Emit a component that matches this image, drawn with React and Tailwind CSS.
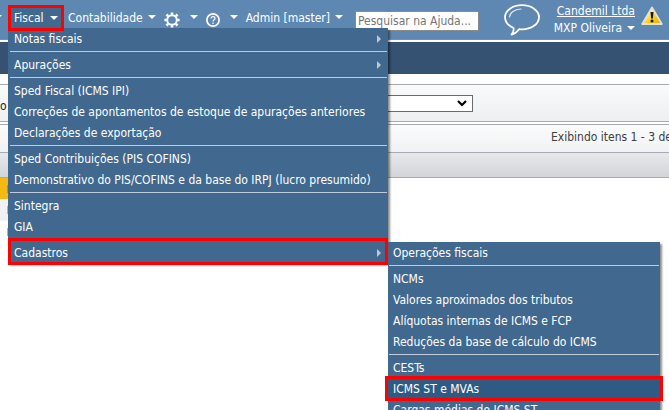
const FISCAL_MENU = [
  [{ label: "Notas fiscais", arrow: true }],
  [{ label: "Apurações", arrow: true }],
  [
    { label: "Sped Fiscal (ICMS IPI)" },
    { label: "Correções de apontamentos de estoque de apurações anteriores" },
    { label: "Declarações de exportação" },
  ],
  [
    { label: "Sped Contribuições (PIS COFINS)" },
    { label: "Demonstrativo do PIS/COFINS e da base do IRPJ (lucro presumido)" },
  ],
  [{ label: "Sintegra" }, { label: "GIA" }],
];

const CADASTROS_MENU = [
  [{ label: "Operações fiscais" }],
  [
    { label: "NCMs" },
    { label: "Valores aproximados dos tributos" },
    { label: "Alíquotas internas de ICMS e FCP" },
    { label: "Reduções da base de cálculo do ICMS" },
  ],
  [
    { label: "CESTs" },
    { label: "ICMS ST e MVAs", selected: true },
    { label: "Cargas médias do ICMS ST" },
  ],
];

function Caret() {
  return (
    <svg className="mb-0.5 h-1 w-2 shrink-0" viewBox="0 0 8 4" fill="#fff">
      <path d="M0 0h8L4 4z" />
    </svg>
  );
}

function ArrowRight() {
  return (
    <svg className="h-2 w-1 shrink-0" viewBox="0 0 4 8" fill="#c3c7cb">
      <path d="M0 0l4 4-4 4z" />
    </svg>
  );
}

function Gear() {
  return (
    <svg className="mt-[3px] size-4" viewBox="0 0 16 16" fill="none" stroke="#fff">
      <circle cx="8" cy="8" r="4.8" strokeWidth="1.9" />
      <path
        strokeWidth="2.6"
        d="M8 .4v2.400M8 13.200v2.400M.4 8h2.400M13.200 8h2.400M2.500 2.500l1.600 1.600M11.900 11.900l1.600 1.600M13.500 2.500l-1.600 1.600M4.100 11.900l-1.600 1.600"
      />
    </svg>
  );
}

function Help() {
  return (
    <svg className="mt-[3px] size-[14px]" viewBox="0 0 14 14" fill="none" stroke="#fff">
      <circle cx="7" cy="7" r="6.100" strokeWidth="1.700" />
      <path strokeWidth="1.200" d="M5 5.600C5 4.300 5.900 3.600 7 3.600s2 .7 2 1.800c0 1.400-2 1.400-2 3.100M7 9.600v1.300" />
    </svg>
  );
}

function Bubble() {
  return (
    <svg className="h-8 w-9" viewBox="0 0 36 32" fill="none" stroke="#fff" strokeLinecap="round" strokeLinejoin="round">
      <path strokeWidth="1.8" d="M9.500 24C4.300 21.600 1 18 1 13.200 1 6.500 8.600 1.200 18 1.200s17 5.300 17 12-7.600 12.200-17 12.200c-1 0-2 0-2.900-.2-1.900 2.500-4.500 4.600-7.600 5.300 1.800-1.800 2.500-4 2-6.500z" />
      <path strokeWidth="1.2" strokeOpacity=".8" d="M5.500 13c.3-4.300 5-7.700 11.500-8" />
    </svg>
  );
}

function Warning() {
  return (
    <svg className="h-5 w-[22px]" viewBox="0 0 22 20">
      <defs>
        <linearGradient id="warn" x1="0" y1="0" x2="1" y2="1">
          <stop offset="0.3" stopColor="#fff6a8" />
          <stop offset="0.6" stopColor="#f8cf1c" />
          <stop offset="1" stopColor="#e0a800" />
        </linearGradient>
      </defs>
      <path d="M11 1.500L20.800 18H1.200z" fill="url(#warn)" stroke="#e3e0d4" strokeWidth="1.800" strokeLinejoin="round" />
      <path d="M9.500 6h3l-.6 6.500h-1.800z" fill="#1c1c1c" />
      <circle cx="11" cy="15" r="1.500" fill="#1c1c1c" />
    </svg>
  );
}

function NavButton({ label, icon, children }) {
  return (
    <button
      type="button"
      aria-label={label}
      className={"flex h-[26px] items-center whitespace-nowrap px-1 " + (icon ? "gap-2.5" : "gap-[5px]")}
    >
      {icon || children}
      <Caret />
    </button>
  );
}

function Separator() {
  return <li role="separator" className="mx-px my-0.5 h-px bg-[#bfcddb]" />;
}

function MenuItem({ label, arrow, selected }) {
  if (selected) {
    return (
      <li className="relative">
        <a href="#" className="flex h-[21px] items-center bg-[#2e5b83] px-[5px] pt-px">{label}</a>
        <span className="pointer-events-none absolute -inset-x-[3px] -inset-y-0.5 border-[3px] border-[#fe0000]" />
      </li>
    );
  }
  return (
    <li>
      <a href="#" className="flex h-[21px] items-center justify-between pt-px pr-[7px] pl-[5px]">
        {label}
        {arrow && <ArrowRight />}
      </a>
    </li>
  );
}

function MenuGroups({ groups }) {
  return groups.map((group, index) => [
    index > 0 && <Separator key={"sep" + index} />,
    ...group.map((item) => <MenuItem key={item.label} {...item} />),
  ]);
}

const MENU = "absolute z-10 bg-[#41698f] text-white whitespace-nowrap shadow-[2px_2px_2px_rgba(0,0,0,0.45)]";

function FiscalMenu() {
  return (
    <ul className={MENU + " left-0 top-[23px] w-[380px] pl-px"}>
      <MenuGroups groups={FISCAL_MENU} />
      <Separator />
      <li className="relative">
        <a href="#" className="flex h-[21px] items-center justify-between pt-px pr-[7px] pl-[5px]">
          Cadastros
          <ArrowRight />
        </a>
        <span className="pointer-events-none absolute -top-1 -bottom-0.5 -left-px right-0 z-20 border-[3px] border-[#fe0000]" />
        <ul className={MENU + " left-full top-0 w-[272px]"}>
          <MenuGroups groups={CADASTROS_MENU} />
        </ul>
      </li>
    </ul>
  );
}

export default function App() {
  return (
    <div className="h-screen overflow-hidden bg-white font-['DejaVu_Sans_Condensed','DejaVu_Sans',sans-serif] text-xs leading-[17px] text-[#333]">
      <header className="flex h-10 items-start border-b border-[#7f8fa3] bg-[#5e88b2] leading-[17px] text-white">
        <div className="w-2 shrink-0 overflow-hidden pt-[15px]">
          <div className="-ml-1.5 w-2"><Caret /></div>
        </div>
        <nav className="flex shrink-0 pt-[5px]">
          <div className="relative">
            <button type="button" className="relative z-20 flex h-[26px] w-14 items-center justify-between border-[3px] border-[#fe0000] bg-[#41698f] px-[3px] pt-px">
              Fiscal
              <Caret />
            </button>
            <FiscalMenu />
          </div>
          <NavButton>Contabilidade</NavButton>
          <NavButton label="Configurações" icon={<Gear />} />
          <NavButton label="Ajuda" icon={<Help />} />
          <NavButton>Admin [master]</NavButton>
        </nav>
        <input
          type="text"
          aria-label="Pesquisar na Ajuda"
          placeholder="Pesquisar na Ajuda..."
          className="ml-2 mt-[11px] h-5 w-[124px] shrink-0 border border-[#8a8a8a] bg-white px-0.5 placeholder:text-[#757575]"
        />
        <div className="ml-auto flex shrink-0 items-start pr-1.5">
          <button type="button" aria-label="Chat" className="mt-1"><Bubble /></button>
          <div className="ml-3.5 mt-[3px] flex flex-col items-end">
            <a href="#" className="underline">Candemil Ltda</a>
            <button type="button" className="flex items-center gap-[5px]">
              MXP Oliveira
              <Caret />
            </button>
          </div>
          <button type="button" aria-label="Avisos" className="ml-1.5 mt-1.5"><Warning /></button>
        </div>
      </header>
      <div className="mt-0.5 h-8 bg-[#355272]" />
      <main className="pt-2.5">
        <form className="flex h-[38px] items-center border-y border-[#a5a9b1] bg-linear-to-b from-[#f9fafa] to-[#eeeff1]">
          <label htmlFor="filtro" className="w-8 pt-1.5 text-[#222]">o</label>
          <select id="filtro" className="h-[17px] w-[441px] appearance-none border border-[#6b6b6b] bg-white" />
          <svg className="-ml-4 h-2 w-2.5" viewBox="0 0 10 8" fill="none" stroke="#000" strokeWidth="2.200">
            <path d="M1 2l4 4 4-4" />
          </svg>
        </form>
        <div className="mt-0.5 h-7 border-t border-[#a5a9b1] bg-linear-to-b from-[#fafbfb] to-[#f1f2f3] pl-[551px] pt-1 whitespace-nowrap text-[#404040]">
          Exibindo itens 1 - 3 de
        </div>
        <div className="h-[26px] border-y border-[#a5a9b1] bg-linear-to-b from-[#e7e8ea] to-[#d2d5d9]" />
        <div className="w-2">
          <div className="flex h-[21px] items-center justify-end bg-[#f5b915]">
            <span className="h-2 w-px bg-[#d9822b]" />
          </div>
          <div className="flex h-[22px] items-center justify-end bg-[#f0f1f3]">
            <span className="h-2 w-px bg-[#d9a877]" />
          </div>
          <div className="flex h-[21px] items-center justify-end">
            <span className="h-2 w-px bg-[#d9a877]" />
          </div>
        </div>
      </main>
    </div>
  );
}
